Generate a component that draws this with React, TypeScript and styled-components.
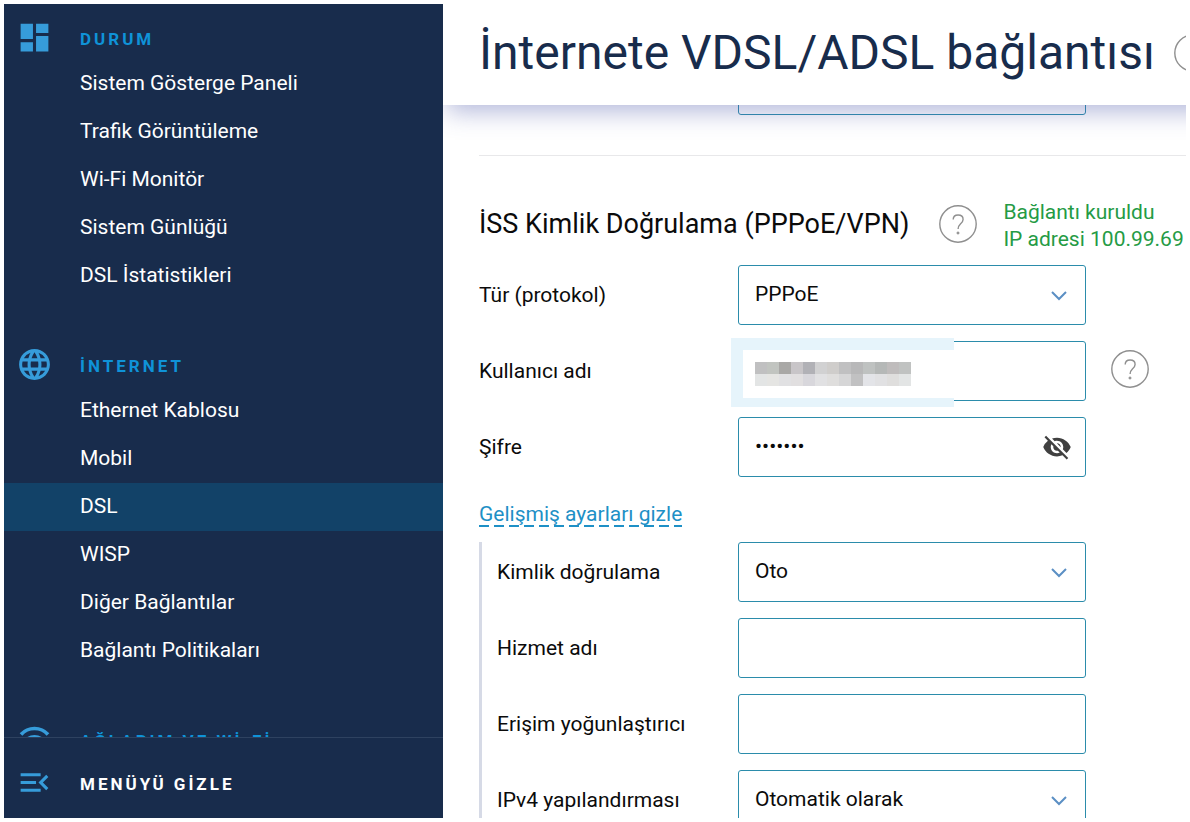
import React from 'react';
import styled, { createGlobalStyle } from 'styled-components';
import { MdLanguage, MdMenuOpen, MdVisibilityOff } from 'react-icons/md';

const GlobalStyle = createGlobalStyle`
  * { box-sizing: border-box; }
  body {
    margin: 0;
    background: #fff;
    color: #0b0b0b;
    font-family: Roboto, "Liberation Sans", sans-serif;
    font-size: 21px;
    line-height: 27px;
  }
  button, input, select { font: inherit; color: inherit; }
`;

const Page = styled.div`
  display: flex;
  height: 100vh;
  padding: 4px;
  overflow: hidden;
`;

const Sidebar = styled.aside`
  display: flex;
  flex-direction: column;
  flex: 0 0 439px;
  background: #182c4c;
  color: #fff;
`;

const Nav = styled.nav`
  flex: 1;
  min-height: 0;
  overflow: hidden;
  padding-top: 15px;
`;

const Section = styled.section`
  margin-bottom: 46px;
`;

const SectionTitle = styled.h2`
  display: flex;
  align-items: center;
  gap: 27px;
  height: 41px;
  margin: 0;
  padding-left: 12px;
  color: #0f93d8;
  font-size: 17px;
  font-weight: 700;
  letter-spacing: 3px;
  white-space: nowrap;

  svg {
    flex: none;
    margin-bottom: 4px;
    color: #369cda;
  }
`;

const NavList = styled.ul`
  margin: 0;
  padding: 0;
  list-style: none;
`;

const NavLink = styled.a<{ $active?: boolean }>`
  display: flex;
  align-items: center;
  height: 48px;
  padding: 0 16px 2px 76px;
  background: ${(p) => (p.$active ? '#124268' : 'transparent')};
  color: #fff;
  text-decoration: none;
`;

const HideMenu = styled.button`
  display: flex;
  align-items: center;
  gap: 27px;
  flex: 0 0 81px;
  padding: 12px 12px 0;
  border: 0;
  border-top: 1px solid #2e4260;
  background: transparent;
  color: #fff;
  font-size: 17px;
  font-weight: 700;
  letter-spacing: 3px;

  svg {
    margin-bottom: 4px;
    color: #369cda;
  }
`;

const Main = styled.main`
  display: flex;
  flex-direction: column;
  flex: 1;
  min-width: 0;
  overflow: hidden;
`;

const Header = styled.header`
  display: flex;
  align-items: center;
  gap: 19px;
  flex: 0 0 101px;
  margin-right: -40px;
  padding: 0 0 4px 36px;
  background: #fff;
  box-shadow: 0 10px 24px -4px rgba(80, 90, 170, 0.45);
  z-index: 1;
`;

const Title = styled.h1`
  margin: 0;
  color: #182c4c;
  font-size: 48px;
  font-weight: 400;
  line-height: 64px;
  white-space: nowrap;
`;

const Content = styled.div`
  flex: 1;
  min-height: 0;
  margin-top: -50px;
  padding-left: 36px;
  overflow: hidden;
  white-space: nowrap;
`;

const Divider = styled.hr`
  height: 1px;
  margin: 40px 0 39px;
  border: 0;
  background: #e8e8ea;
`;

const GroupHead = styled.div`
  display: flex;
  align-items: center;
  height: 58px;
  margin-bottom: 12px;
`;

const GroupTitle = styled.h2`
  margin: 0 30px 0 0;
  font-size: 27px;
  font-weight: 400;
`;

const Status = styled.p`
  margin: 0 0 0 26px;
  padding-top: 4px;
  color: #259b45;
`;

const Rows = styled.div<{ $nested?: boolean }>`
  display: flex;
  flex-direction: column;
  gap: 16px;
  padding-left: ${(p) => (p.$nested ? '15px' : '0')};
  border-left: ${(p) => (p.$nested ? '3px solid #d6dae6' : '0')};
`;

const Row = styled.div<{ $nested?: boolean }>`
  display: grid;
  grid-template-columns: ${(p) => (p.$nested ? '241px' : '259px')} 348px auto;
  align-items: center;
  justify-content: start;

  > button { margin: 0 0 5px 25px; }
`;

const Label = styled.label`
  display: block;
`;

const Control = styled.div`
  position: relative;

  > svg {
    position: absolute;
    top: 26px;
    right: 19px;
    pointer-events: none;
  }
`;

const Input = styled.input`
  display: block;
  width: 100%;
  height: 60px;
  padding: 0 56px 2px 16px;
  border: 1px solid #2b8cab;
  border-radius: 3px;
  outline: 0;
  background: #fff;
`;

const Select = styled(Input).attrs({ as: 'select' })`
  appearance: none;
`;

const IconButton = styled.button`
  display: flex;
  flex: none;
  padding: 0;
  border: 0;
  background: transparent;
  color: #8f8f8f;
`;

const Reveal = styled(IconButton)`
  position: absolute;
  top: 15px;
  right: 14px;
  color: #404040;
`;

const Toggle = styled.button`
  display: block;
  height: 26px;
  margin: 24px 0 15px;
  padding: 0;
  border: 0;
  background: repeating-linear-gradient(90deg, #1e90c6 0 10px, transparent 10px 15px) left bottom / 100% 2px no-repeat;
  color: #1e90c6;
  line-height: 26px;
`;

const Redaction = styled.div`
  position: absolute;
  top: -3px;
  left: -7px;
  width: 223px;
  height: 69px;
  padding: 12px;
  border: solid #e6f4fb;
  border-width: 12px 0 9px 12px;
  background: #fff;
  pointer-events: none;
`;

const Mosaic = styled.div`
  display: grid;
  grid-template-columns: repeat(13, 12px);
  grid-auto-rows: 12px;
`;

const Cell = styled.span<{ $tone: string }>`
  background: ${(p) => p.$tone};
`;

const tones = [
  '#c0c0c1', '#c1c4c0', '#a9a8a6', '#c8c5c8', '#b1b1b6', '#d1d1d2', '#cfcdcb', '#c0c0c1', '#b8b8b9', '#bfc2c1', '#b5b8b7', '#bfbcbc', '#c0c2c1',
  '#e3e5e5', '#e5e5e3', '#e1e1e3', '#e1dfe0', '#d8d7dc', '#e1e1e3', '#dfdedd', '#d6d6d7', '#c1c1c2', '#e3e4e8', '#e1e1e3', '#dfdedd', '#e3e5e5',
];

const DashboardIcon = () => (
  <svg width="37" height="37" viewBox="0 0 24 24" fill="currentColor" aria-hidden="true">
    <path d="M3 13h8V3H3v10zm0 8h8v-6H3v6zm10 0h8V11h-8v10zm0-18v6h8V3h-8z" />
  </svg>
);

const WifiIcon = () => (
  <svg width="37" height="37" viewBox="0 0 37 37" fill="none" stroke="currentColor" strokeWidth="3.600" aria-hidden="true">
    <path d="M5 13.500a18.200 18.200 0 0 1 27 0" />
    <path d="M10.500 19a11.500 11.500 0 0 1 16 0" />
    <circle cx="18.500" cy="26" r="2.500" fill="currentColor" stroke="none" />
  </svg>
);

const Chevron = () => (
  <svg width="16" height="10" viewBox="0 0 16 10" fill="none" stroke="#5b8fc4" strokeWidth="2" aria-hidden="true">
    <path d="M1 1l7 7 7-7" />
  </svg>
);

const Help = () => (
  <IconButton type="button" aria-label="Yardım">
    <svg width="38" height="38" viewBox="0 0 38 38" fill="none" stroke="currentColor" strokeWidth="1.4" aria-hidden="true">
      <circle cx="19" cy="19" r="18.2" />
      <path d="M14.2 14.6c0-2.8 1.9-4.6 4.9-4.6s5 1.7 5 4.4c0 2-1 3-2.7 4.6-1.6 1.5-2.3 2.500-2.300 5" />
      <circle cx="19" cy="28" r="1.100" fill="currentColor" strokeWidth="0.800" />
    </svg>
  </IconButton>
);

const sections = [
  {
    title: 'DURUM',
    icon: <DashboardIcon />,
    items: ['Sistem Gösterge Paneli', 'Trafik Görüntüleme', 'Wi-Fi Monitör', 'Sistem Günlüğü', 'DSL İstatistikleri'],
  },
  {
    title: 'İNTERNET',
    icon: <MdLanguage size={37} />,
    items: ['Ethernet Kablosu', 'Mobil', 'DSL', 'WISP', 'Diğer Bağlantılar', 'Bağlantı Politikaları'],
  },
  { title: 'AĞLARIM VE Wİ-Fİ', icon: <WifiIcon />, items: [] },
];

type SelectFieldProps = { id: string; label: string; value: string; nested?: boolean };

const SelectField = ({ id, label, value, nested }: SelectFieldProps) => (
  <Row $nested={nested}>
    <Label htmlFor={id}>{label}</Label>
    <Control>
      <Select id={id}>
        <option>{value}</option>
      </Select>
      <Chevron />
    </Control>
  </Row>
);

const TextField = ({ id, label }: { id: string; label: string }) => (
  <Row $nested>
    <Label htmlFor={id}>{label}</Label>
    <Control>
      <Input id={id} type="text" />
    </Control>
  </Row>
);

export default function App() {
  return (
    <>
      <GlobalStyle />
      <Page>
        <Sidebar>
          <Nav>
            {sections.map((section) => (
              <Section key={section.title}>
                <SectionTitle>
                  {section.icon}
                  {section.title}
                </SectionTitle>
                <NavList>
                  {section.items.map((item) => (
                    <li key={item}>
                      <NavLink href="#" $active={item === 'DSL'}>{item}</NavLink>
                    </li>
                  ))}
                </NavList>
              </Section>
            ))}
          </Nav>
          <HideMenu type="button">
            <MdMenuOpen size={37} />
            MENÜYÜ GİZLE
          </HideMenu>
        </Sidebar>
        <Main>
          <Header>
            <Title>İnternete VDSL/ADSL bağlantısı</Title>
            <Help />
          </Header>
          <Content>
            <Row>
              <span />
              <Input type="text" aria-label="Bağlantı" />
            </Row>
            <Divider />
            <GroupHead>
              <GroupTitle>İSS Kimlik Doğrulama (PPPoE/VPN)</GroupTitle>
              <Help />
              <Status>
                Bağlantı kuruldu
                <br />
                IP adresi 100.99.69
              </Status>
            </GroupHead>
            <Rows>
              <SelectField id="protocol" label="Tür (protokol)" value="PPPoE" />
              <Row>
                <Label htmlFor="user">Kullanıcı adı</Label>
                <Control>
                  <Input id="user" type="text" />
                  <Redaction>
                    <Mosaic>
                      {tones.map((tone, i) => (
                        <Cell key={i} $tone={tone} />
                      ))}
                    </Mosaic>
                  </Redaction>
                </Control>
                <Help />
              </Row>
              <Row>
                <Label htmlFor="password">Şifre</Label>
                <Control>
                  <Input id="password" type="password" defaultValue="keeneti" />
                  <Reveal type="button" aria-label="Şifreyi göster">
                    <MdVisibilityOff size={30} />
                  </Reveal>
                </Control>
              </Row>
            </Rows>
            <Toggle type="button">Gelişmiş ayarları gizle</Toggle>
            <Rows $nested>
              <SelectField nested id="auth" label="Kimlik doğrulama" value="Oto" />
              <TextField id="service" label="Hizmet adı" />
              <TextField id="concentrator" label="Erişim yoğunlaştırıcı" />
              <SelectField nested id="ipv4" label="IPv4 yapılandırması" value="Otomatik olarak" />
            </Rows>
          </Content>
        </Main>
      </Page>
    </>
  );
}
